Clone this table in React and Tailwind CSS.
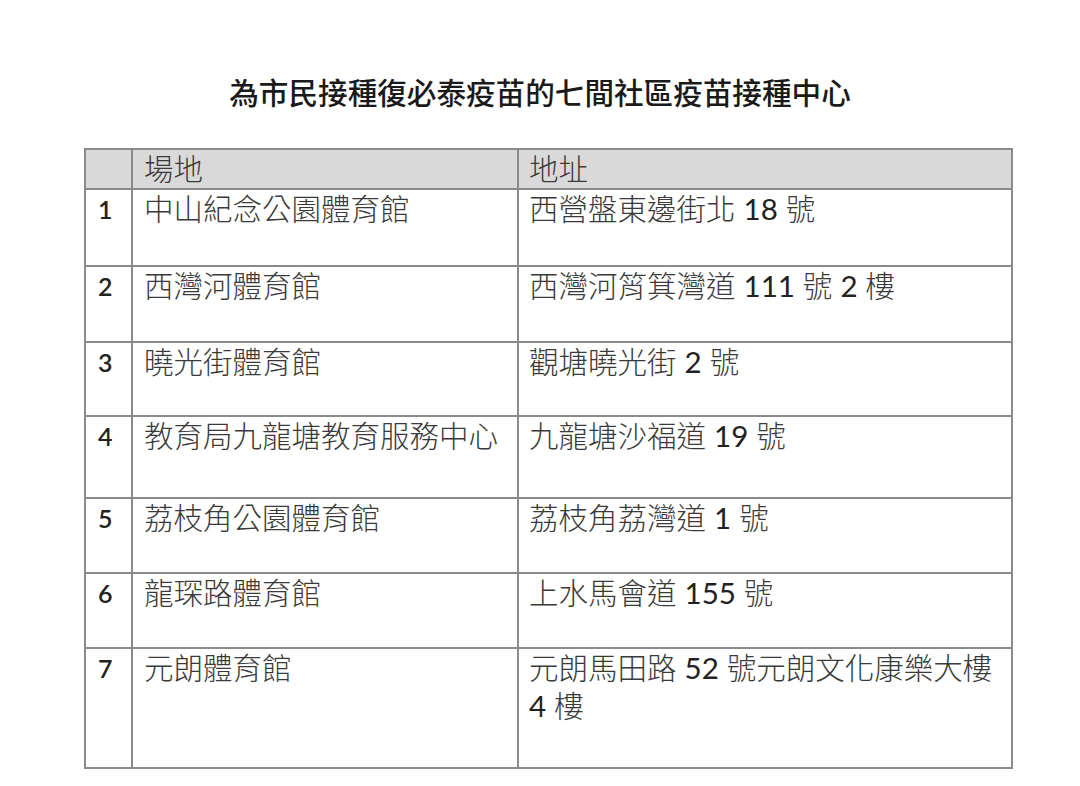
const rows = [
  { n: '1', venue: '中山紀念公園體育館', addr: ['西營盤東邊街北 18 號'], h: 'h-[77px]' },
  { n: '2', venue: '西灣河體育館', addr: ['西灣河筲箕灣道 111 號 2 樓'], h: 'h-[76px]' },
  { n: '3', venue: '曉光街體育館', addr: ['觀塘曉光街 2 號'], h: 'h-[74px]' },
  { n: '4', venue: '教育局九龍塘教育服務中心', addr: ['九龍塘沙福道 19 號'], h: 'h-[82px]' },
  { n: '5', venue: '荔枝角公園體育館', addr: ['荔枝角荔灣道 1 號'], h: 'h-[75px]' },
  { n: '6', venue: '龍琛路體育館', addr: ['上水馬會道 155 號'], h: 'h-[75px]' },
  { n: '7', venue: '元朗體育館', addr: ['元朗馬田路 52 號元朗文化康樂大樓', '4 樓'], h: 'h-[120px]' },
]

// digits are set a touch heavier, like the Calibri numerals in the source doc
function Mixed({ text }) {
  return text.split(/(\d+)/).map((part, i) =>
    /^\d+$/.test(part)
      ? <span key={i} className="font-normal text-[#222]">{part}</span>
      : <span key={i}>{part}</span>
  )
}

export default function App() {
  return (
    <div className="w-[1080px] h-[786px] bg-white font-['Lato','Noto_Sans_CJK_TC',sans-serif] text-[#3a3a3a]">
      <h1 className="pt-[74px] text-center text-[29.6px] leading-[36px] font-medium text-[#1a1a1a] font-['Noto_Sans_CJK_TC',sans-serif]">
        為市民接種復必泰疫苗的七間社區疫苗接種中心
      </h1>

      <table className="mt-[38px] ml-[84px] w-[927px] border-collapse table-fixed text-[29.5px] leading-[38px]">
        <colgroup>
          <col className="w-[47px]" />
          <col className="w-[386px]" />
          <col className="w-[494px]" />
        </colgroup>
        <thead>
          <tr className="h-[40px] bg-[#d9d9d9]">
            <th className="border-2 border-[#8a8a8a]"></th>
            <th className="border-2 border-[#8a8a8a] px-[11px] text-left align-top font-light">場地</th>
            <th className="border-2 border-[#8a8a8a] px-[10px] text-left align-top font-light">地址</th>
          </tr>
        </thead>
        <tbody>
          {rows.map(r => (
            <tr key={r.n} className={r.h}>
              <td className="border-2 border-[#8a8a8a] pl-[12px] align-top text-[25px] font-semibold text-[#222]">{r.n}</td>
              <td className="border-2 border-[#8a8a8a] px-[11px] align-top font-light whitespace-nowrap">{r.venue}</td>
              <td className="border-2 border-[#8a8a8a] px-[10px] align-top font-light">
                {r.addr.map((line, i) => (
                  <div key={i} className="whitespace-nowrap"><Mixed text={line} /></div>
                ))}
              </td>
            </tr>
          ))}
        </tbody>
      </table>
    </div>
  )
}
